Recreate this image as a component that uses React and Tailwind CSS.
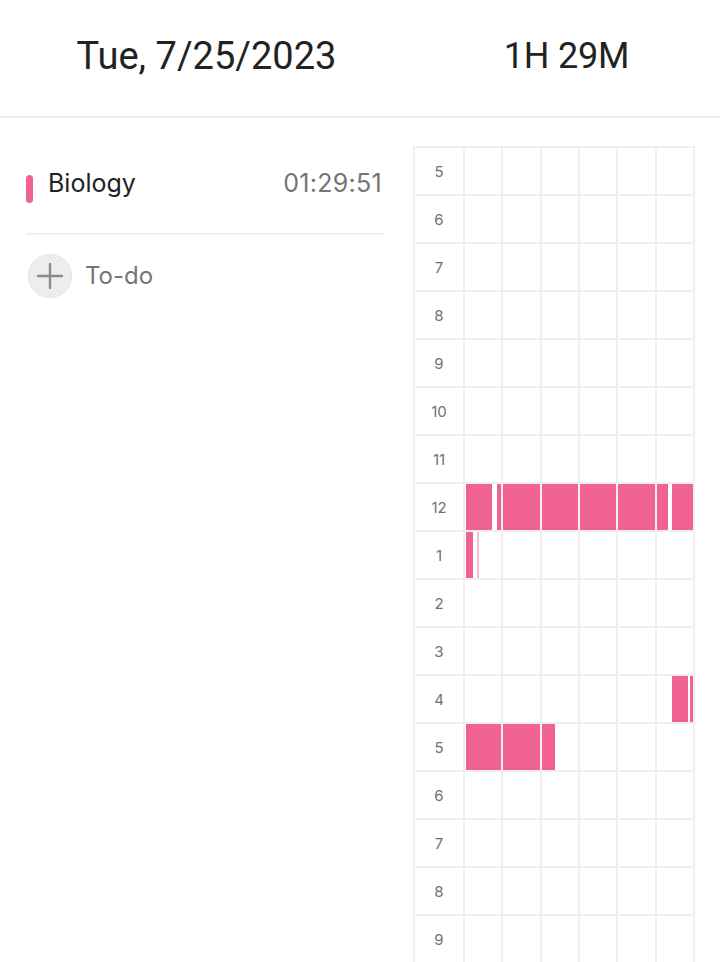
import React from 'react';

// hour labels down the side of the timeline, 5am through 9pm
const hours = [5, 6, 7, 8, 9, 10, 11, 12, 1, 2, 3, 4, 5, 6, 7, 8, 9];

// study blocks per row -> per 10-minute cell -> [left %, width %, faint?]
const blocks = {
    7: {
        0: [[3, 72.5], [87, 13]],
        1: [[0, 100]],
        2: [[0, 100]],
        3: [[0, 100]],
        4: [[0, 100]],
        5: [[0, 32], [42, 58]],
    },
    8: { 0: [[3, 20], [33, 5, true]] },
    11: { 5: [[42, 44], [93, 7]] },
    12: { 0: [[3, 97]], 1: [[0, 100]], 2: [[0, 36]] },
};

const Timeline = () => (
    <div className="w-[282px] border-l-2 border-t-2 border-[#f0f0f2]">
        {hours.map((h, row) => (
            <div key={row} className="flex h-12 border-b-2 border-[#f0f0f2]">
                <div className="w-[50px] shrink-0 border-r-2 border-[#f0f0f2] flex items-center justify-center pt-[2px] text-[15px] text-[#707070]">
                    {h}
                </div>
                {[0, 1, 2, 3, 4, 5].map((c) => (
                    <div key={c} className="relative flex-1 border-r-2 border-[#f0f0f2]">
                        {(blocks[row]?.[c] || []).map(([left, width, faint], i) => (
                            <div
                                key={i}
                                className={`absolute inset-y-0 ${faint ? 'bg-[#f8bbd0]' : 'bg-[#f06292]'}`}
                                style={{ left: `${left}%`, width: `${width}%` }}
                            />
                        ))}
                    </div>
                ))}
            </div>
        ))}
    </div>
);

export default function App() {
    return (
        <div className="w-[720px] h-[962px] overflow-hidden bg-white font-['Inter',sans-serif]">
            {/* Date and total time */}
            <header className="flex h-[118px] pb-[4px] border-b-2 border-[#f0f0f0] text-[#222] font-['Roboto',sans-serif]">
                <div className="w-[413px] flex items-center justify-center text-[38px]">
                    Tue, 7/25/2023
                </div>
                <div className="flex-1 flex items-center justify-center text-[36px] tracking-[-0.2px]">
                    1H 29M
                </div>
            </header>

            <div className="flex">
                {/* Subjects */}
                <div className="w-[413px] shrink-0 pl-[26px] pr-[29px] pt-[38px]">
                    <div className="flex items-center h-[56px]">
                        <div className="w-[7px] h-[28px] rounded-full bg-[#f06292] mt-[10px]" />
                        <span className="ml-[15px] text-[25px] text-[#222]">Biology</span>
                        <span className="ml-auto mr-[2px] text-[25px] tracking-[0.3px] text-[#757575]">01:29:51</span>
                    </div>
                    <div className="mt-[21px] h-[2px] bg-[#efefef]" />
                    <div className="flex items-center mt-[19px]">
                        <div className="ml-[2px] w-[44px] h-[44px] rounded-full bg-[#ededed] border border-[#e2e2e2] flex items-center justify-center">
                            <svg width="26" height="26" viewBox="0 0 26 26" fill="none" stroke="#8a8a8a" strokeWidth="2.4" strokeLinecap="round">
                                <line x1="13" y1="1" x2="13" y2="25" />
                                <line x1="1" y1="13" x2="25" y2="13" />
                            </svg>
                        </div>
                        <span className="ml-[13px] text-[24px] text-[#757575]">To-do</span>
                    </div>
                </div>

                {/* Day timeline */}
                <div className="pt-[28px]">
                    <Timeline />
                </div>
            </div>
        </div>
    );
}
